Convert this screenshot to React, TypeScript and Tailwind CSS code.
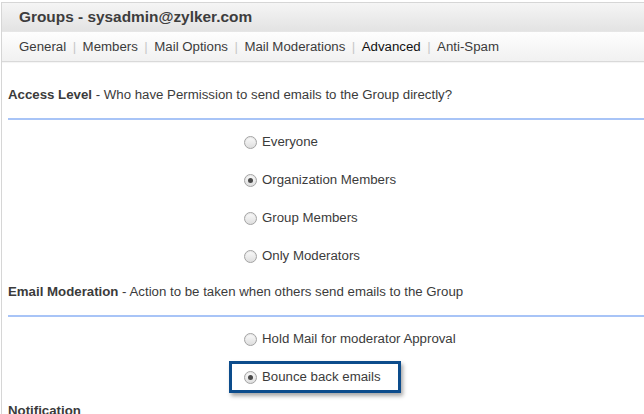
import React from 'react';

const tabs = ['General', 'Members', 'Mail Options', 'Mail Moderations', 'Advanced', 'Anti-Spam'];

function Radio({ checked }: { checked?: boolean }) {
    return (
        <span className="w-[13px] h-[13px] rounded-full border border-[#a3a3a3] bg-gradient-to-b from-[#fbfbfb] to-[#dedede] shadow-[inset_0_1px_1px_rgba(0,0,0,0.08)] flex items-center justify-center flex-shrink-0">
            {checked && <span className="w-[5px] h-[5px] rounded-full bg-[#4a4a4a]" />}
        </span>
    );
}

function Option({ label, checked }: { label: string; checked?: boolean }) {
    return (
        <div className="h-[38px] flex items-center pl-[236px]">
            <Radio checked={checked} />
            <span className="ml-[5px]">{label}</span>
        </div>
    );
}

export default function App() {
    return (
        <div className="w-[644px] h-[414px] overflow-hidden bg-white pt-[2px] pl-px text-[13.25px] leading-4 text-[#3b3b3b] font-['Liberation_Sans',Arial,sans-serif]">
            <div className="h-full border-l border-t border-[#d6d6d6]">
                {/* Header */}
                <div className="h-[29px] flex items-center pl-[17px] bg-gradient-to-b from-[#f5f5f5] to-[#e3e3e3] border-b border-[#e6e6e6]">
                    <h1 className="text-[15.4px] font-bold text-[#3d3d3d] -mt-px">Groups - sysadmin@zylker.com</h1>
                </div>

                {/* Tabs */}
                <div className="h-[30px] flex items-center pl-[17px] bg-gradient-to-b from-[#fefefe] to-[#f1f1f1] border-b border-[#d9d9d9] shadow-[0_1px_1px_rgba(0,0,0,0.04)]">
                    {tabs.map((t, i) => (
                        <React.Fragment key={t}>
                            {i > 0 && <span className="px-[6.5px] text-[#c8c8c8]">|</span>}
                            <span className={t === 'Advanced' ? 'text-[#111]' : 'text-[#3b3b3b]'}>{t}</span>
                        </React.Fragment>
                    ))}
                </div>

                {/* Content */}
                <div className="pl-[6px]">
                    <p className="mt-[25px]">
                        <b className="font-bold">Access Level</b> - Who have Permission to send emails to the Group directly?
                    </p>
                    <div className="mt-[15px] h-[2px] bg-[#a8c4f7]" />
                    <div className="pt-[3px]">
                        <Option label="Everyone" />
                        <Option label="Organization Members" checked />
                        <Option label="Group Members" />
                        <Option label="Only Moderators" />
                    </div>

                    <p className="mt-[9px]">
                        <b className="font-bold">Email Moderation</b> - Action to be taken when others send emails to the Group
                    </p>
                    <div className="mt-[15px] h-[2px] bg-[#a8c4f7]" />
                    <div className="pt-[3px]">
                        <Option label="Hold Mail for moderator Approval" />
                        <div className="h-[38px] flex items-center pl-[221px]">
                            <div className="h-[32px] w-[172px] flex items-center pl-[12px] border-[3px] border-[#0c4c8c] shadow-[2px_3px_4px_rgba(0,0,0,0.35)]">
                                <Radio checked />
                                <span className="ml-[5px]">Bounce back emails</span>
                            </div>
                        </div>
                    </div>
                    <p className="mt-[7px] font-bold">Notification</p>
                </div>
            </div>
        </div>
    );
}
